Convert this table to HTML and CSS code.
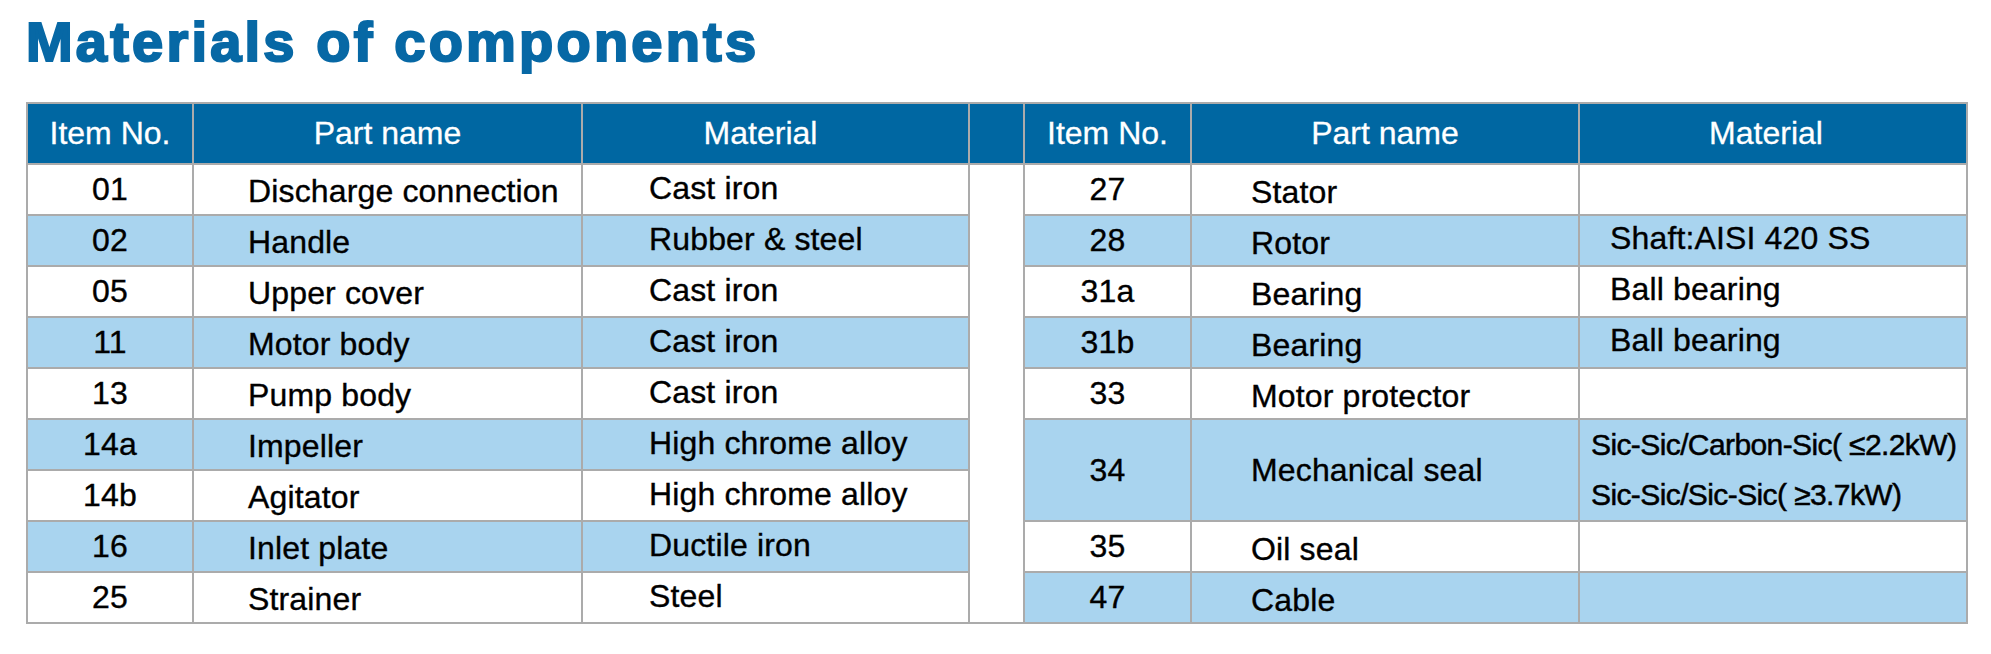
FILE: index.html
```html
<!DOCTYPE html>
<html lang="en">
<head>
<meta charset="utf-8">
<title>Materials of components</title>
<link rel="stylesheet" href="styles.css">
</head>
<body>
<h1 class="title">Materials of components</h1>
<div class="table">
  <div class="hd c1">Item No.</div>
  <div class="hd c2">Part name</div>
  <div class="hd c3 mat-hd">Material</div>
  <div class="hd c4"></div>
  <div class="hd c5">Item No.</div>
  <div class="hd c6">Part name</div>
  <div class="hd c7 mat-hd2">Material</div>

  <div class="cell c1 num w">01</div><div class="cell c2 pl w">Discharge connection</div><div class="cell c3 ml w">Cast iron</div>
  <div class="cell c4 spacer"></div>
  <div class="cell c5 num w">27</div><div class="cell c6 pr w">Stator</div><div class="cell c7 mr w"></div>

  <div class="cell c1 num b">02</div><div class="cell c2 pl b">Handle</div><div class="cell c3 ml b">Rubber &amp; steel</div>
  <div class="cell c5 num b">28</div><div class="cell c6 pr b">Rotor</div><div class="cell c7 mr b">Shaft:AISI 420 SS</div>

  <div class="cell c1 num w">05</div><div class="cell c2 pl w">Upper cover</div><div class="cell c3 ml w">Cast iron</div>
  <div class="cell c5 num w">31a</div><div class="cell c6 pr w">Bearing</div><div class="cell c7 mr w">Ball bearing</div>

  <div class="cell c1 num b">11</div><div class="cell c2 pl b">Motor body</div><div class="cell c3 ml b">Cast iron</div>
  <div class="cell c5 num b">31b</div><div class="cell c6 pr b">Bearing</div><div class="cell c7 mr b">Ball bearing</div>

  <div class="cell c1 num w">13</div><div class="cell c2 pl w">Pump body</div><div class="cell c3 ml w">Cast iron</div>
  <div class="cell c5 num w">33</div><div class="cell c6 pr w">Motor protector</div><div class="cell c7 mr w"></div>

  <div class="cell c1 num b">14a</div><div class="cell c2 pl b">Impeller</div><div class="cell c3 ml b">High chrome alloy</div>
  <div class="cell c5 num b tall">34</div><div class="cell c6 pr b tall mid">Mechanical seal</div>
  <div class="cell c7 b tall seal"><span>Sic-Sic/Carbon-Sic( ≤2.2kW)</span><span>Sic-Sic/Sic-Sic( ≥3.7kW)</span></div>

  <div class="cell c1 num w">14b</div><div class="cell c2 pl w">Agitator</div><div class="cell c3 ml w">High chrome alloy</div>

  <div class="cell c1 num b">16</div><div class="cell c2 pl b">Inlet plate</div><div class="cell c3 ml b">Ductile iron</div>
  <div class="cell c5 num w">35</div><div class="cell c6 pr w">Oil seal</div><div class="cell c7 mr w"></div>

  <div class="cell c1 num w">25</div><div class="cell c2 pl w">Strainer</div><div class="cell c3 ml w">Steel</div>
  <div class="cell c5 num b">47</div><div class="cell c6 pr b">Cable</div><div class="cell c7 mr b"></div>
</div>
</body>
</html>
```

FILE: styles.css
```css
html, body {
  margin: 0;
  padding: 0;
  background: #ffffff;
}

body {
  font-family: "Liberation Sans", Arial, sans-serif;
  color: #000;
}

.title {
  margin: 0 0 32px 26px;
  padding-top: 14px;
  font-size: 56px;
  line-height: 56px;
  font-weight: 700;
  letter-spacing: 3.2px;
  color: #0768a5;
  -webkit-text-stroke: 2.2px #0768a5;
}

.table {
  display: grid;
  grid-template-columns: 164px 387px 385px 53px 165px 386px 386px;
  grid-template-rows: 59px repeat(9, 49px);
  gap: 2px;
  padding: 2px;
  background: #ababab;
  width: max-content;
  margin-left: 26px;
}

.c1 { grid-column: 1; }
.c2 { grid-column: 2; }
.c3 { grid-column: 3; }
.c4 { grid-column: 4; }
.c5 { grid-column: 5; }
.c6 { grid-column: 6; }
.c7 { grid-column: 7; }

.hd {
  background: #0067a2;
  color: #fff;
  font-size: 32px;
  display: flex;
  align-items: center;
  justify-content: center;
  -webkit-text-stroke: 0.3px #fff;
}

.mat-hd { padding-right: 30px; }
.mat-hd2 { padding-right: 14px; }

.cell {
  font-size: 32px;
  display: flex;
  align-items: center;
  white-space: nowrap;
  letter-spacing: 0.15px;
  -webkit-text-stroke: 0.35px #000;
}

.w { background: #ffffff; }
.b { background: #a9d4ef; }

.spacer {
  background: #ffffff;
  grid-row: 2 / span 9;
}

.num { justify-content: center; }
.pl { padding-left: 54px; padding-top: 4px; }
.ml { padding-left: 66px; padding-bottom: 2px; }
.pr { padding-left: 59px; padding-top: 6px; }
.pr.mid { padding-top: 0; }
.mr { padding-left: 30px; padding-bottom: 4px; }

.tall { grid-row: span 2; }

.seal {
  flex-direction: column;
  align-items: flex-start;
  justify-content: center;
  padding-left: 11px;
  font-size: 30px;
  line-height: 50px;
  letter-spacing: -0.6px;
  -webkit-text-stroke: 0.5px #000;
}
```
